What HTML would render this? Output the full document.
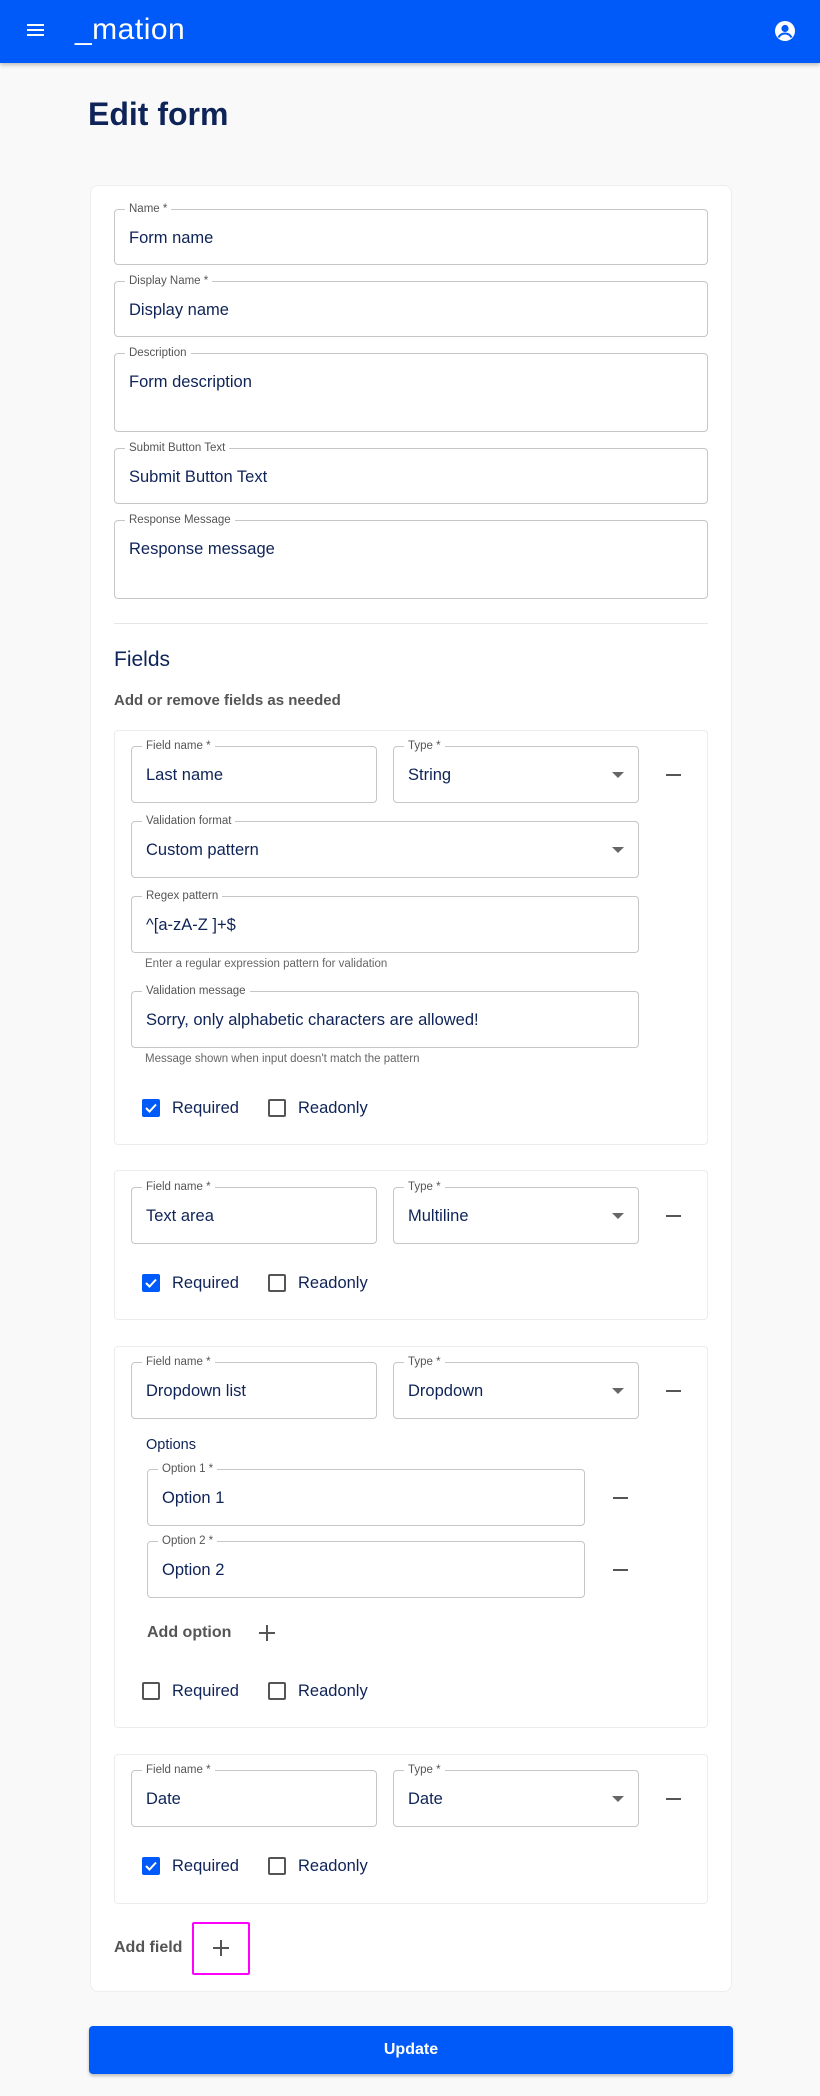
<!DOCTYPE html>
<html><head><meta charset="utf-8"><style>
*{box-sizing:border-box;margin:0;padding:0}
body{width:820px;height:2096px;background:#f9f9f9;font-family:"Liberation Sans",Arial,sans-serif;position:relative;overflow:hidden;color:#0e2357}
.a{position:absolute}
.hdr{left:0;top:0;width:820px;height:63px;background:#005af9;box-shadow:0 2px 4px rgba(0,0,0,.25)}
.in{position:absolute;border:1px solid #c6c6c6;border-radius:4px;background:#fff}
.in .l{position:absolute;left:10px;top:-8px;background:#fff;padding:0 4px;font-size:11.5px;color:#555;line-height:14px}
.in .v{position:absolute;left:14px;top:18px;font-size:16.5px;line-height:20px;color:#0e2357}
.in .dd{position:absolute;right:14px;top:25px;width:0;height:0;border-left:6px solid transparent;border-right:6px solid transparent;border-top:6px solid #666}
.sub{position:absolute;border:1px solid #ececec;border-radius:4px;background:#fff}
.minus{position:absolute;width:15px;height:2px;background:#555}
.help{position:absolute;font-size:11.5px;color:#666}
.cb{position:absolute;width:18px;height:18px;border:2px solid #555;border-radius:2px}
.cb.on{background:#005af9;border-color:#005af9}
.cbt{position:absolute;font-size:16.5px;color:#0e2357;line-height:20px}
.bold{position:absolute;font-weight:bold;color:#555;font-size:16px}
</style></head><body>
<div class="a hdr"></div>
<svg class="a" style="left:26px;top:22px" width="20" height="16" viewBox="0 0 20 16"><rect x="1" y="2" width="17" height="2" fill="#fff"/><rect x="1" y="7" width="17" height="2" fill="#fff"/><rect x="1" y="12" width="17" height="2" fill="#fff"/></svg>
<div class="a" style="left:75px;top:12px;font-size:30px;color:#fff;letter-spacing:0.5px;line-height:36px">_mation</div>
<svg class="a" style="left:774px;top:20px" width="22" height="22" viewBox="0 0 22 22"><circle cx="11" cy="11" r="10" fill="#fff"/><circle cx="11" cy="8.5" r="3.6" fill="#005af9"/><path d="M4.5 17.5c1.5-3 4-4 6.5-4s5 1 6.5 4" stroke="#005af9" stroke-width="2" fill="none"/></svg>
<div class="a" style="left:88px;top:96px;font-size:32px;font-weight:bold;color:#0e2357">Edit form</div>

<div class="a" style="left:90px;top:185px;width:642px;height:1807px;background:#fff;border:1px solid #eee;border-radius:8px"></div>

<div class="in" style="left:114px;top:209px;width:594px;height:56px"><span class="l">Name *</span><span class="v">Form name</span></div>
<div class="in" style="left:114px;top:281px;width:594px;height:56px"><span class="l">Display Name *</span><span class="v">Display name</span></div>
<div class="in" style="left:114px;top:353px;width:594px;height:79px"><span class="l">Description</span><span class="v">Form description</span></div>
<div class="in" style="left:114px;top:448px;width:594px;height:56px"><span class="l">Submit Button Text</span><span class="v">Submit Button Text</span></div>
<div class="in" style="left:114px;top:520px;width:594px;height:79px"><span class="l">Response Message</span><span class="v">Response message</span></div>
<div class="a" style="left:114px;top:623px;width:594px;height:1px;background:#e6e6e6"></div>
<div class="a" style="left:114px;top:648px;font-size:21px;color:#0e2357">Fields</div>
<div class="bold" style="left:114px;top:692px;font-size:15px">Add or remove fields as needed</div>

<!-- card 1 -->
<div class="sub" style="left:114px;top:730px;width:594px;height:415px"></div>
<div class="in" style="left:131px;top:746px;width:246px;height:57px"><span class="l">Field name *</span><span class="v">Last name</span></div>
<div class="in" style="left:393px;top:746px;width:246px;height:57px"><span class="l">Type *</span><span class="v">String</span><span class="dd"></span></div>
<div class="minus" style="left:666px;top:774px"></div>
<div class="in" style="left:131px;top:821px;width:508px;height:57px"><span class="l">Validation format</span><span class="v">Custom pattern</span><span class="dd"></span></div>
<div class="in" style="left:131px;top:896px;width:508px;height:57px"><span class="l">Regex pattern</span><span class="v">^[a-zA-Z ]+$</span></div>
<div class="help" style="left:145px;top:958px">Enter a regular expression pattern for validation</div>
<div class="in" style="left:131px;top:991px;width:508px;height:57px"><span class="l">Validation message</span><span class="v">Sorry, only alphabetic characters are allowed!</span></div>
<div class="help" style="left:145px;top:1053px">Message shown when input doesn't match the pattern</div>
<div class="cb on" style="left:142px;top:1099px"><svg width="14" height="14" viewBox="0 0 14 14" style="position:absolute;left:0;top:0"><path d="M2 7l3.5 3.5L12 3.5" stroke="#fff" stroke-width="2" fill="none"/></svg></div>
<div class="cbt" style="left:172px;top:1098px">Required</div>
<div class="cb" style="left:268px;top:1099px"></div>
<div class="cbt" style="left:298px;top:1098px">Readonly</div>

<!-- card 2 -->
<div class="sub" style="left:114px;top:1170px;width:594px;height:150px"></div>
<div class="in" style="left:131px;top:1187px;width:246px;height:57px"><span class="l">Field name *</span><span class="v">Text area</span></div>
<div class="in" style="left:393px;top:1187px;width:246px;height:57px"><span class="l">Type *</span><span class="v">Multiline</span><span class="dd"></span></div>
<div class="minus" style="left:666px;top:1215px"></div>
<div class="cb on" style="left:142px;top:1274px"><svg width="14" height="14" viewBox="0 0 14 14" style="position:absolute;left:0;top:0"><path d="M2 7l3.5 3.5L12 3.5" stroke="#fff" stroke-width="2" fill="none"/></svg></div>
<div class="cbt" style="left:172px;top:1273px">Required</div>
<div class="cb" style="left:268px;top:1274px"></div>
<div class="cbt" style="left:298px;top:1273px">Readonly</div>

<!-- card 3 -->
<div class="sub" style="left:114px;top:1346px;width:594px;height:382px"></div>
<div class="in" style="left:131px;top:1362px;width:246px;height:57px"><span class="l">Field name *</span><span class="v">Dropdown list</span></div>
<div class="in" style="left:393px;top:1362px;width:246px;height:57px"><span class="l">Type *</span><span class="v">Dropdown</span><span class="dd"></span></div>
<div class="minus" style="left:666px;top:1390px"></div>
<div class="a" style="left:146px;top:1437px;font-size:14.5px;color:#0e2357">Options</div>
<div class="in" style="left:147px;top:1469px;width:438px;height:57px"><span class="l">Option 1 *</span><span class="v">Option 1</span></div>
<div class="minus" style="left:613px;top:1497px"></div>
<div class="in" style="left:147px;top:1541px;width:438px;height:57px"><span class="l">Option 2 *</span><span class="v">Option 2</span></div>
<div class="minus" style="left:613px;top:1569px"></div>
<div class="bold" style="left:147px;top:1624px">Add option</div>
<div class="a" style="left:259px;top:1632px;width:16px;height:2px;background:#555"></div>
<div class="a" style="left:266px;top:1625px;width:2px;height:16px;background:#555"></div>
<div class="cb" style="left:142px;top:1682px"></div>
<div class="cbt" style="left:172px;top:1681px">Required</div>
<div class="cb" style="left:268px;top:1682px"></div>
<div class="cbt" style="left:298px;top:1681px">Readonly</div>

<!-- card 4 -->
<div class="sub" style="left:114px;top:1754px;width:594px;height:150px"></div>
<div class="in" style="left:131px;top:1770px;width:246px;height:57px"><span class="l">Field name *</span><span class="v">Date</span></div>
<div class="in" style="left:393px;top:1770px;width:246px;height:57px"><span class="l">Type *</span><span class="v">Date</span><span class="dd"></span></div>
<div class="minus" style="left:666px;top:1798px"></div>
<div class="cb on" style="left:142px;top:1857px"><svg width="14" height="14" viewBox="0 0 14 14" style="position:absolute;left:0;top:0"><path d="M2 7l3.5 3.5L12 3.5" stroke="#fff" stroke-width="2" fill="none"/></svg></div>
<div class="cbt" style="left:172px;top:1856px">Required</div>
<div class="cb" style="left:268px;top:1857px"></div>
<div class="cbt" style="left:298px;top:1856px">Readonly</div>

<div class="bold" style="left:114px;top:1939px">Add field</div>
<div class="a" style="left:192px;top:1922px;width:58px;height:53px;border:2px solid #ff00ff;border-radius:2px"></div>
<div class="a" style="left:213px;top:1947px;width:16px;height:2px;background:#555"></div>
<div class="a" style="left:220px;top:1940px;width:2px;height:16px;background:#555"></div>

<div class="a" style="left:89px;top:2026px;width:644px;height:48px;background:#005af9;border-radius:4px;box-shadow:0 2px 3px rgba(0,0,0,.25);color:#fff;font-weight:bold;font-size:16px;text-align:center;line-height:48px">Update</div>
</body></html>
